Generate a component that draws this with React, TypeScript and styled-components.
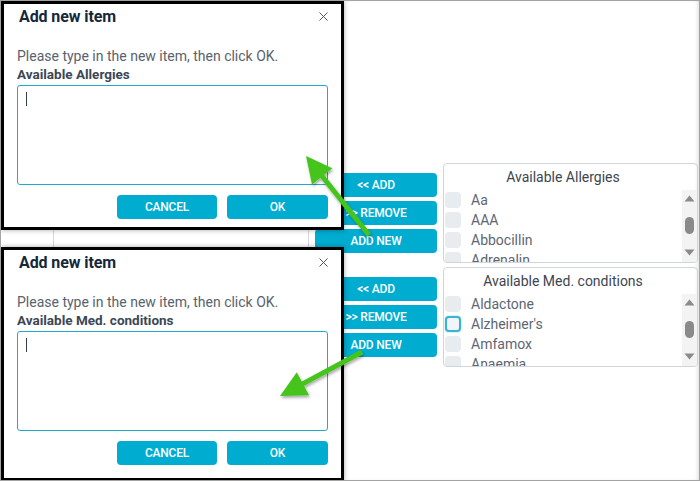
import React from "react";
import styled, { createGlobalStyle } from "styled-components";

const Global = createGlobalStyle`
  html, body { margin: 0; padding: 0; background: #fff; }
  body { font-family: Roboto, "Liberation Sans", sans-serif; }
  * { box-sizing: border-box; }
`;

const CYAN = "#00acd0";

const Page = styled.div`
  position: relative;
  width: 700px;
  height: 481px;
  border: 1px solid #a3a3a3;
  box-shadow: inset -3px 0 4px -2px rgba(0, 0, 0, 0.15);
  display: flex;
  overflow: hidden;
  background: #fff;
`;

const LeftPane = styled.div`
  width: 314px;
  flex: none;
  padding-left: 52px;
  padding-right: 6px;
  display: flex;
`;

const LeftGrid = styled.div`
  flex: 1;
  border-left: 1px solid #d3d8de;
  border-right: 1px solid #d3d8de;
`;

const RightArea = styled.div`
  flex: 1;
  padding-top: 162px;
  display: flex;
  flex-direction: column;
  gap: 4px;
`;

const Row = styled.div`
  display: flex;
  gap: 6px;
`;

const ButtonStack = styled.div`
  width: 122px;
  margin-top: 10px;
  display: flex;
  flex-direction: column;
  gap: 4px;
`;

const Button = styled.button<{ $w?: number }>`
  width: ${(p) => (p.$w ? `${p.$w}px` : "100%")};
  height: 24px;
  border: none;
  border-radius: 4px;
  background: ${CYAN};
  color: #fff;
  font-family: Roboto, "Liberation Sans", sans-serif;
  font-weight: 500;
  font-size: 12px;
  letter-spacing: -0.2px;
  text-transform: uppercase;
  padding: 0;
  display: flex;
  align-items: center;
  justify-content: center;
`;

const ListPanel = styled.div`
  width: 255px;
  height: 100px;
  border: 1px solid #cfd5db;
  border-radius: 4px;
  display: flex;
  flex-direction: column;
  overflow: hidden;
`;

const PanelTitle = styled.div`
  height: 26px;
  flex: none;
  text-align: center;
  padding-right: 15px;
  font-size: 14px;
  line-height: 26px;
  color: #3d4650;
`;

const ListBody = styled.div`
  flex: 1;
  display: flex;
  overflow: hidden;
`;

const Items = styled.div`
  flex: 1;
  padding-left: 1px;
  display: flex;
  flex-direction: column;
`;

const Item = styled.div`
  height: 20px;
  flex: none;
  display: flex;
  align-items: center;
  gap: 10px;
  font-size: 14px;
  color: #5d6673;
`;

const Check = styled.span<{ $focus?: boolean }>`
  width: 16px;
  height: 16px;
  border-radius: 4px;
  background: ${(p) => (p.$focus ? "#f2f5f7" : "#e8ecef")};
  border: ${(p) => (p.$focus ? "2px solid #3ab3d2" : "none")};
  box-shadow: ${(p) => (p.$focus ? "0 0 2px rgba(58,179,210,0.6)" : "none")};
  flex: none;
`;

const ScrollBar = styled.div`
  width: 15px;
  background: #f3f3f3;
  display: flex;
  flex-direction: column;
  align-items: center;
  justify-content: space-between;
  padding: 5px 0 6px;
`;

const Thumb = styled.div`
  width: 9px;
  height: 17px;
  border-radius: 5px;
  background: #8a8a8a;
`;

const Dialog = styled.div<{ $top: number; $h: number }>`
  position: absolute;
  left: 0px;
  top: ${(p) => p.$top}px;
  width: 343px;
  height: ${(p) => p.$h}px;
  border: 3px solid #000;
  background: #fff;
  box-shadow: 0 0 5px rgba(0, 0, 0, 0.35);
  padding: 0 12px 0 13px;
  display: flex;
  flex-direction: column;
`;

const DialogHeader = styled.div`
  height: 24px;
  display: flex;
  align-items: center;
  justify-content: space-between;
`;

const Title = styled.div`
  font-size: 16px;
  font-weight: 700;
  color: #15283a;
  padding-left: 2px;
  letter-spacing: -0.1px;
`;

const CloseIcon = styled.svg`
  margin-right: 1px;
  margin-top: 1px;
`;

const Prompt = styled.div`
  margin-top: 19px;
  font-size: 14px;
  line-height: 18px;
  color: #59626d;
`;

const Label = styled.div`
  font-size: 13.5px;
  font-weight: 700;
  line-height: 18px;
  color: #3b4755;
`;

const TextArea = styled.div`
  margin-top: 2px;
  width: 311px;
  height: 100px;
  border: 1px solid #20a9c9;
  border-radius: 3px;
  padding: 6px 8px;
`;

const Caret = styled.div`
  width: 1px;
  height: 14px;
  background: #33404d;
`;

const DialogButtons = styled.div`
  margin-top: 10px;
  display: flex;
  justify-content: flex-end;
  gap: 10px;
  width: 311px;
`;

const ArrowLayer = styled.svg`
  position: absolute;
  left: 0;
  top: 0;
  pointer-events: none;
`;

type ListProps = { title: string; items: string[]; focus?: number };

const List = ({ title, items, focus }: ListProps) => (
  <ListPanel>
    <PanelTitle>{title}</PanelTitle>
    <ListBody>
      <Items>
        {items.map((it, i) => (
          <Item key={it}>
            <Check $focus={i === focus} />
            {it}
          </Item>
        ))}
      </Items>
      <ScrollBar>
        <svg width="11" height="7" viewBox="0 0 11 7">
          <path d="M0.5 6.5 L5.5 0.5 L10.5 6.5 Z" fill="#8a8a8a" />
        </svg>
        <Thumb />
        <svg width="11" height="7" viewBox="0 0 11 7">
          <path d="M0.5 0.5 L5.5 6.5 L10.5 0.5 Z" fill="#8a8a8a" />
        </svg>
      </ScrollBar>
    </ListBody>
  </ListPanel>
);

const Buttons = () => (
  <ButtonStack>
    <Button>&lt;&lt; Add</Button>
    <Button>&gt;&gt; Remove</Button>
    <Button>Add New</Button>
  </ButtonStack>
);

const AddDialog = ({ top, h, label }: { top: number; h: number; label: string }) => (
  <Dialog $top={top} $h={h}>
    <DialogHeader>
      <Title>Add new item</Title>
      <CloseIcon width="9" height="9" viewBox="0 0 9 9">
        <path d="M0.5 0.5 L8.5 8.5 M8.5 0.5 L0.5 8.5" stroke="#555" strokeWidth="1" fill="none" />
      </CloseIcon>
    </DialogHeader>
    <Prompt>Please type in the new item, then click OK.</Prompt>
    <Label>{label}</Label>
    <TextArea>
      <Caret />
    </TextArea>
    <DialogButtons>
      <Button $w={100}>Cancel</Button>
      <Button $w={101}>OK</Button>
    </DialogButtons>
  </Dialog>
);

const Arrow = ({ x1, y1, x2, y2 }: { x1: number; y1: number; x2: number; y2: number }) => {
  const dx = x2 - x1;
  const dy = y2 - y1;
  const len = Math.hypot(dx, dy);
  const ux = dx / len;
  const uy = dy / len;
  const hl = 26;
  const hw = 13;
  const bx = x2 - ux * hl;
  const by = y2 - uy * hl;
  const px = -uy;
  const py = ux;
  const pts = `${x2},${y2} ${bx + px * hw},${by + py * hw} ${bx - px * hw},${by - py * hw}`;
  return (
    <g filter="url(#sh)">
      <line x1={x1} y1={y1} x2={bx + ux * 2} y2={by + uy * 2} stroke="#45c41f" strokeWidth={5} />
      <polygon points={pts} fill="#45c41f" />
    </g>
  );
};

export default function App() {
  return (
    <>
      <Global />
      <Page>
        <LeftPane>
          <LeftGrid />
        </LeftPane>
        <RightArea>
          <Row>
            <Buttons />
            <List title="Available Allergies" items={["Aa", "AAA", "Abbocillin", "Adrenalin"]} />
          </Row>
          <Row>
            <Buttons />
            <List
              title="Available Med. conditions"
              items={["Aldactone", "Alzheimer's", "Amfamox", "Anaemia"]}
              focus={1}
            />
          </Row>
        </RightArea>
        <AddDialog top={0} h={229} label="Available Allergies" />
        <AddDialog top={246} h={234} label="Available Med. conditions" />
        <ArrowLayer width="700" height="481">
          <defs>
            <filter id="sh" x="-20%" y="-20%" width="140%" height="140%">
              <feDropShadow dx="1" dy="2" stdDeviation="1.5" floodColor="#000" floodOpacity="0.35" />
            </filter>
          </defs>
          <Arrow x1={368} y1={234} x2={305} y2={155} />
          <Arrow x1={361} y1={351} x2={279} y2={395} />
        </ArrowLayer>
      </Page>
    </>
  );
}
